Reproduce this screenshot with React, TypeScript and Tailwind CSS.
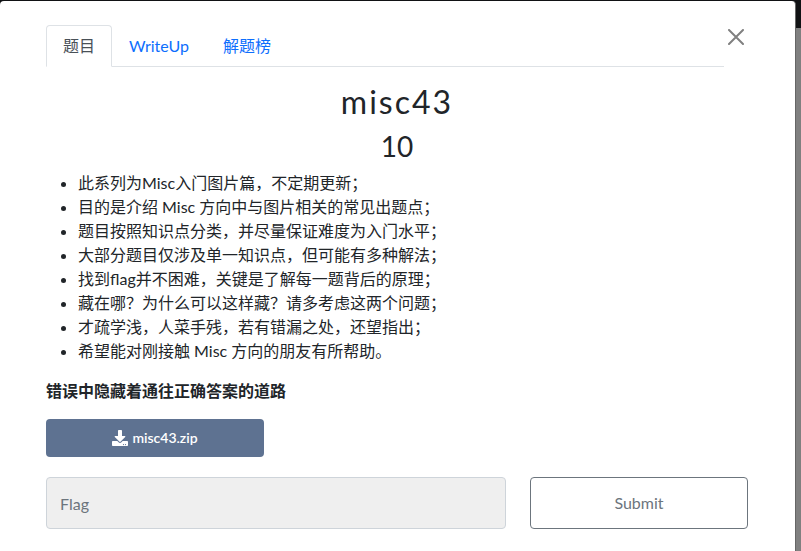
import React from "react";

const hints: string[] = [
  "此系列为Misc入门图片篇，不定期更新；",
  "目的是介绍 Misc 方向中与图片相关的常见出题点；",
  "题目按照知识点分类，并尽量保证难度为入门水平；",
  "大部分题目仅涉及单一知识点，但可能有多种解法；",
  "找到flag并不困难，关键是了解每一题背后的原理；",
  "藏在哪？为什么可以这样藏？请多考虑这两个问题；",
  "才疏学浅，人菜手残，若有错漏之处，还望指出；",
  "希望能对刚接触 Misc 方向的朋友有所帮助。",
];

function Tabs() {
  return (
    <ul className="flex grow border-b border-[#dee2e6]">
      <li className="-mb-px">
        <a
          href="#challenge"
          className="block rounded-t border border-[#dee2e6] border-b-white bg-white px-4 py-2 text-[#495057]"
        >
          题目
        </a>
      </li>
      <li className="-mb-px">
        <a href="#writeup" className="block border border-transparent px-4 py-2 text-[#0d6efd]">
          WriteUp
        </a>
      </li>
      <li className="-mb-px">
        <a href="#solves" className="block border border-transparent px-4 py-2 text-[#0d6efd]">
          解题榜
        </a>
      </li>
    </ul>
  );
}

function CloseButton() {
  return (
    <button type="button" aria-label="Close" className="flex h-6 w-6 shrink-0 items-center justify-center text-[#808080]">
      <svg viewBox="0 0 16 16" className="h-4 w-4" fill="none" stroke="currentColor" strokeWidth="2" strokeLinecap="round">
        <path d="M1 1 15 15M15 1 1 15" />
      </svg>
    </button>
  );
}

function DownloadIcon() {
  return (
    <svg viewBox="0 0 512 512" className="h-4 w-4" fill="currentColor" aria-hidden="true">
      <path d="M216 0h80c13.300 0 24 10.700 24 24v168h87.700c17.800 0 26.700 21.500 14.100 34.100L269.700 378.300c-7.500 7.500-19.800 7.500-27.300 0L90.100 226.100c-12.600-12.600-3.700-34.100 14.100-34.100H192V24c0-13.300 10.700-24 24-24zm296 376v112c0 13.300-10.700 24-24 24H24c-13.300 0-24-10.700-24-24V376c0-13.300 10.700-24 24-24h146.700l49 49c20.100 20.100 52.500 20.100 72.600 0l49-49H488c13.300 0 24 10.700 24 24zm-124 88c0-11-9-20-20-20s-20 9-20 20 9 20 20 20 20-9 20-20zm64 0c0-11-9-20-20-20s-20 9-20 20 9 20 20 20 20-9 20-20z" />
    </svg>
  );
}

export default function App() {
  return (
    <div className="flex min-h-screen bg-linear-to-b from-[#111214] from-[28px] to-[#808080] to-[28px] pt-px pr-[5px] font-[Lato,'Noto_Sans_CJK_SC',sans-serif] text-base leading-6 text-[#212529]">
      <main className="grow rounded-t border-r border-[#666666] bg-white pt-6 pr-[47px] pb-[21px] pl-[46px]">
        <header className="flex items-start">
          <Tabs />
          <CloseButton />
        </header>

        <h2 className="mt-4 mb-2 text-center text-[32px] leading-[38px] tracking-[2px]">misc43</h2>
        <h3 className="mb-2 text-center text-[28px] leading-[34px]">10</h3>

        <ul className="mb-4 list-disc pl-8">
          {hints.map((hint) => (
            <li key={hint}>{hint}</li>
          ))}
        </ul>
        <p className="mb-4 font-bold">错误中隐藏着通往正确答案的道路</p>

        <div className="mb-5 grid grid-cols-12 gap-6">
          <a
            href="#misc43.zip"
            className="col-span-4 flex h-[38px] items-center justify-center gap-1 rounded bg-[#5e7291] text-sm font-semibold text-white"
          >
            <DownloadIcon />
            <span>misc43.zip</span>
          </a>
        </div>

        <form className="grid grid-cols-12 gap-6" onSubmit={(event) => event.preventDefault()}>
          <input
            type="text"
            aria-label="Flag"
            placeholder="Flag"
            className="col-span-8 h-[52px] min-w-0 rounded border border-[#ced4da] bg-[#efefef] px-[13px] placeholder:text-[#6c757d]"
          />
          <button type="submit" className="col-span-4 h-[52px] rounded border border-[#6c757d] text-[#6c757d]">
            Submit
          </button>
        </form>
      </main>
    </div>
  );
}
